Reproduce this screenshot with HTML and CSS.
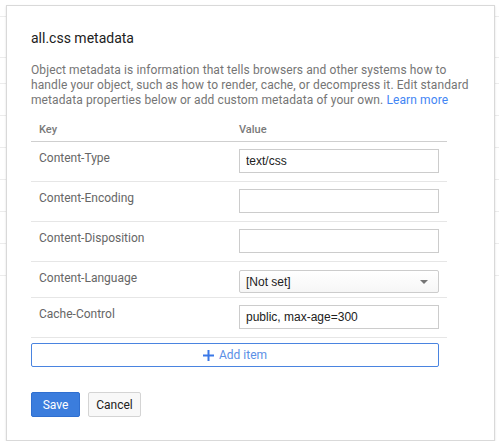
FILE: index.html
```html
<!DOCTYPE html>
<html>

<head>
    <title>all.css metadata</title>
    <meta charset="UTF-8">
    <link rel="stylesheet" href="styles.css">
</head>

<body>
    <div class="dialog">
        <h2 class="dialog-title">all.css metadata</h2>
        <p class="dialog-desc">
            Object metadata is information that tells browsers and other systems how to
            handle your object, such as how to render, cache, or decompress it. Edit standard
            metadata properties below or add custom metadata of your own. <a href="#">Learn more</a>
        </p>

        <div class="meta-table">
            <div class="meta-row meta-head">
                <div class="meta-key">Key</div>
                <div class="meta-value">Value</div>
            </div>
            <div class="meta-row">
                <div class="meta-key">Content-Type</div>
                <div class="meta-value"><input class="meta-input" type="text" value="text/css" /></div>
            </div>
            <div class="meta-row">
                <div class="meta-key">Content-Encoding</div>
                <div class="meta-value"><input class="meta-input" type="text" value="" /></div>
            </div>
            <div class="meta-row">
                <div class="meta-key">Content-Disposition</div>
                <div class="meta-value"><input class="meta-input" type="text" value="" /></div>
            </div>
            <div class="meta-row meta-row-select">
                <div class="meta-key">Content-Language</div>
                <div class="meta-value">
                    <div class="meta-select">
                        <span>[Not set]</span>
                        <span class="caret"></span>
                    </div>
                </div>
            </div>
            <div class="meta-row">
                <div class="meta-key">Cache-Control</div>
                <div class="meta-value"><input class="meta-input" type="text" value="public, max-age=300" /></div>
            </div>
        </div>

        <button class="add-item" type="button">
            <svg width="11" height="11" viewBox="0 0 11 11">
                <path d="M5.5 0v11M0 5.5h11" stroke="#3b78e7" stroke-width="2" fill="none" />
            </svg>
            <span>Add item</span>
        </button>

        <div class="actions">
            <button class="btn btn-primary" type="button">Save</button>
            <button class="btn" type="button">Cancel</button>
        </div>
    </div>
</body>

</html>
```

FILE: styles.css
```css
body {
    margin: 0;
    font-family: Roboto, "Noto Sans", sans-serif;
    background-color: #fff;
    /* faint table lines of the page behind the dialog */
    background-image:
        repeating-linear-gradient(to bottom, transparent 0 31px, #ececec 31px 32px),
        linear-gradient(#ececec, #ececec),
        linear-gradient(#ececec, #ececec);
    background-size: 100% 224px, 100% 1px, 100% 1px;
    background-position: 0 52px, 0 57px, 0 16px;
    background-repeat: no-repeat;
}

.dialog {
    box-sizing: border-box;
    width: 489px;
    margin: 5px 0 0 6px;
    padding: 22px 22px 23px 24px;
    background-color: #fff;
    border: 1px solid #d9d9d9;
    box-shadow: 0 1px 2px rgba(0, 0, 0, 0.12);
}

.dialog-title {
    margin: 0;
    font-size: 14px;
    font-weight: 400;
    line-height: 20px;
    color: #212121;
}

.dialog-desc {
    margin: 15px 0 0 0;
    font-size: 12px;
    line-height: 15px;
    letter-spacing: 0.1px;
    color: #757575;
}

.dialog-desc a {
    color: #4285f4;
    text-decoration: none;
}

.meta-table {
    width: 416px;
    margin-top: 10px;
}

.meta-row {
    display: flex;
    border-bottom: 1px solid #e6e6e6;
}

.meta-key {
    box-sizing: border-box;
    width: 208px;
    padding: 8px 0 0 8px;
    font-size: 12px;
    line-height: 16px;
    color: #666;
}

.meta-value {
    padding: 7px 0 8px 0;
}

.meta-head {
    border-bottom-color: #cfcfcf;
}

.meta-head .meta-key,
.meta-head .meta-value {
    padding-top: 0;
    padding-bottom: 0;
    height: 23px;
    line-height: 23px;
    font-size: 11px;
    font-weight: 500;
    color: #7a7a7a;
}

.meta-row-select .meta-value {
    padding: 8px 0 4px 0;
}

.meta-input {
    box-sizing: border-box;
    display: block;
    width: 200px;
    height: 24px;
    margin: 0;
    padding: 0 6px;
    border: 1px solid #ccc;
    border-radius: 0;
    font-family: "Liberation Sans", Arial, sans-serif;
    font-size: 12px;
    color: #212121;
    outline: none;
}

.meta-select {
    box-sizing: border-box;
    display: flex;
    align-items: center;
    justify-content: space-between;
    width: 200px;
    height: 23px;
    padding: 0 10px 0 6px;
    border: 1px solid #ccc;
    border-radius: 2px;
    background: linear-gradient(#fff, #f6f6f6);
    font-family: "Liberation Sans", Arial, sans-serif;
    font-size: 12px;
    color: #212121;
}

.caret {
    width: 0;
    height: 0;
    border-left: 4px solid transparent;
    border-right: 4px solid transparent;
    border-top: 4px solid #757575;
}

.add-item {
    box-sizing: border-box;
    display: flex;
    align-items: center;
    justify-content: center;
    gap: 5px;
    width: 408px;
    height: 24px;
    margin-top: 5px;
    padding: 0;
    background-color: #fff;
    border: 1px solid #4a84e0;
    border-radius: 2px;
    font-family: inherit;
    font-size: 12px;
    color: #5a8fe6;
    cursor: pointer;
}

.actions {
    display: flex;
    gap: 8px;
    margin-top: 25px;
}

.btn {
    box-sizing: border-box;
    width: 53px;
    height: 25px;
    padding: 0;
    background-color: #f8f8f8;
    border: 1px solid #d4d4d4;
    border-radius: 2px;
    font-family: inherit;
    font-size: 12px;
    color: #212121;
    cursor: pointer;
}

.btn-primary {
    width: 49px;
    background-color: #3b7ddd;
    border-color: #2f6fd0;
    color: #fff;
}
```
